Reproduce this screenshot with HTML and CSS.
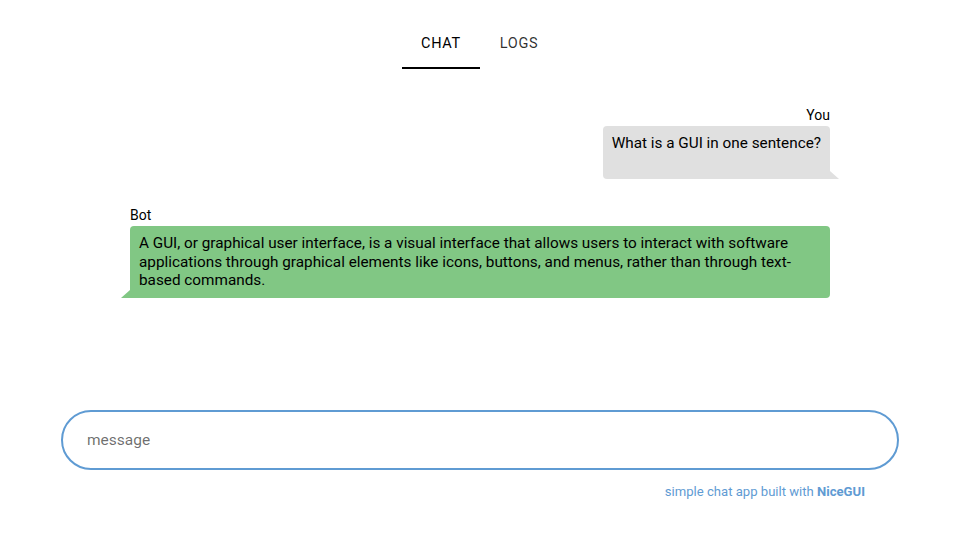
FILE: index.html
```html
<!DOCTYPE html>
<html lang="en">
<head>
<meta charset="utf-8">
<title>Chat</title>
<link rel="stylesheet" href="styles.css">
</head>
<body>
<div class="page">
  <nav class="tabs">
    <div class="tab tab-active">CHAT</div>
    <div class="tab">LOGS</div>
  </nav>
  <main class="chat">
    <div class="msg msg-sent">
      <div class="msg-name">You</div>
      <div class="msg-text">What is a GUI in one sentence?</div>
    </div>
    <div class="msg msg-received">
      <div class="msg-name">Bot</div>
      <div class="msg-text">A GUI, or graphical user interface, is a visual interface that allows users to interact with software applications through graphical elements like icons, buttons, and menus, rather than through text-based commands.</div>
    </div>
  </main>
  <footer class="footer">
    <div class="input"><span class="placeholder">message</span></div>
    <div class="credit">simple chat app built with <strong>NiceGUI</strong></div>
  </footer>
</div>
</body>
</html>
```
FILE: styles.css
```css
* { box-sizing: border-box; }
html, body { margin: 0; padding: 0; background: #fff; }
body {
  font-family: Roboto, "Liberation Sans", Arial, sans-serif;
  color: #000;
}
.page {
  height: 540px;
  display: flex;
  flex-direction: column;
  align-items: center;
}
.tabs {
  display: flex;
  margin-top: 21px;
  height: 48px;
}
.tab {
  position: relative;
  width: 78px;
  display: flex;
  align-items: center;
  justify-content: center;
  padding-bottom: 4px;
  font-size: 14.5px;
  font-weight: 400;
  letter-spacing: 0.05em;
  color: rgba(0,0,0,0.82);
}
.tab-active { color: #000; }
.tab-active::after {
  content: "";
  position: absolute;
  left: 0; right: 0; bottom: 0;
  height: 2px;
  background: #000;
}
.chat {
  width: 720px;
  flex: 1;
  display: flex;
  flex-direction: column;
  gap: 28px;
  padding-top: 38px;
}
.msg { display: flex; flex-direction: column; }
.msg-sent { align-items: flex-end; padding-right: 10px; }
.msg-received { align-items: flex-start; padding-left: 10px; }
.msg-name {
  font-size: 14px;
  line-height: 17px;
  margin-bottom: 2px;
}
.msg-text {
  position: relative;
  font-size: 15.3px;
  line-height: 18.5px;
  padding: 8px 9px;
  min-height: 53px;
  border-radius: 4px;
}
.msg-sent .msg-text {
  background: #e0e0e0;
  border-bottom-right-radius: 0;
}
.msg-sent .msg-text::before {
  content: "";
  position: absolute;
  right: -9px;
  bottom: 0;
  border-bottom: 8px solid #e0e0e0;
  border-right: 9px solid transparent;
}
.msg-received .msg-text {
  background: #81c784;
  border-bottom-left-radius: 0;
  width: 700px;
}
.msg-received .msg-text::before {
  content: "";
  position: absolute;
  left: -9px;
  bottom: 0;
  border-bottom: 8px solid #81c784;
  border-left: 9px solid transparent;
}
.footer {
  width: 838px;
  display: flex;
  flex-direction: column;
  align-items: flex-end;
  padding-bottom: 41px;
}
.input {
  width: 100%;
  height: 60px;
  border: 2px solid #5f9bd3;
  border-radius: 30px;
  display: flex;
  align-items: center;
  padding-left: 24px;
}
.placeholder {
  font-size: 15.5px;
  color: rgba(0,0,0,0.58);
}
.credit {
  margin-top: 14px;
  margin-right: 34px;
  font-size: 13.1px;
  line-height: 15px;
  color: #5f9bd3;
}
.credit strong { font-weight: 700; }
```
